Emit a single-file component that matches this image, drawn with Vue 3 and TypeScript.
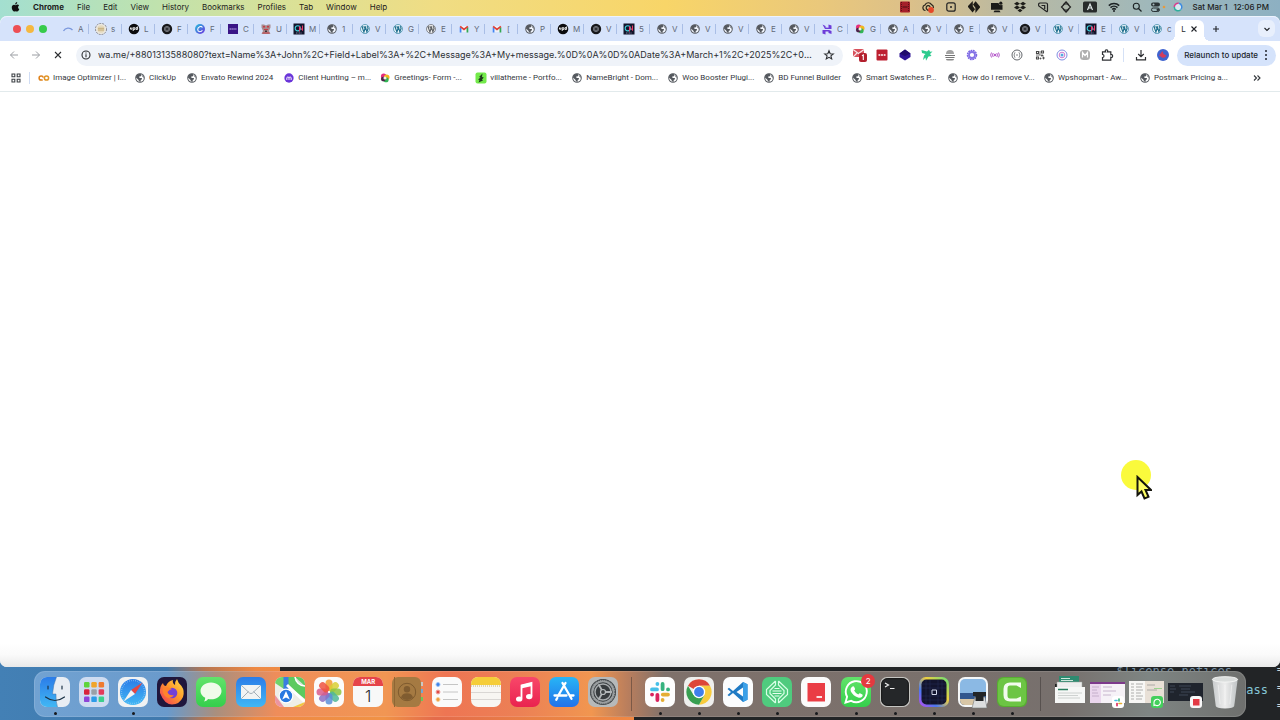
<script setup lang="ts">
interface Tab { icon: string; title: string }
interface Bookmark { icon: string; title: string; long?: boolean }
interface DockItem { icon: string; label: string; running?: boolean; badge?: string; date?: { month: string; day: string } }

const menus: string[] = ['File', 'Edit', 'View', 'History', 'Bookmarks', 'Profiles', 'Tab', 'Window', 'Help']

const statusIcons: string[] = ['st-film', 'st-cloud', 'st-square', 'st-bolt', 'st-display', 'st-dropbox', 'st-note', 'st-diamond', 'st-input', 'st-wifi', 'st-search', 'st-control', 'st-siri']

const tabs: Tab[] = [
  ['spinner', 'A'], ['ring', 's'], ['upd', 'L'], ['gpt', 'F'], ['canva', 'F'], ['violet', 'C'], ['bear', 'U'],
  ['neon', 'M'], ['globe', '1'], ['wp', 'V'], ['wp', 'G'], ['wpg', 'E'], ['gmail', 'Y'], ['gmail', '['],
  ['globe', 'P'], ['upd', 'M'], ['gpt', 'V'], ['neon', '5'], ['globe', 'V'], ['globe', 'V'], ['globe', 'V'],
  ['globe', 'E'], ['globe', 'V'], ['hletter', 'C'], ['flower', 'G'], ['globe', 'A'], ['globe', 'V'], ['globe', 'E'],
  ['globe', 'V'], ['gpt', 'V'], ['wp', 'V'], ['neon', 'E'], ['wp', 'V'], ['wp', 'c'],
].map(([icon, title]) => ({ icon, title }))

const url = 'wa.me/+8801313588080?text=Name%3A+John%2C+Field+Label%3A+%2C+Message%3A+My+message.%0D%0A%0D%0ADate%3A+March+1%2C+2025%2C+06%3A0…'

const extensions: string[] = ['x-mail', 'x-dots', 'x-cube', 'x-bird', 'x-stack', 'x-gear', 'x-signal', 'x-braces', 'x-qr', 'x-orbit', 'x-m', 'x-puzzle']

const bookmarks: Bookmark[] = [
  { icon: 'co', title: 'Image Optimizer | I...', long: true },
  { icon: 'globe', title: 'ClickUp' },
  { icon: 'globe', title: 'Envato Rewind 2024' },
  { icon: 'mcircle', title: 'Client Hunting – m...', long: true },
  { icon: 'flower', title: 'Greetings- Form -...', long: true },
  { icon: 'villa', title: 'villatheme - Portfo...', long: true },
  { icon: 'globe', title: 'NameBright - Dom...', long: true },
  { icon: 'globe', title: 'Woo Booster Plugi...', long: true },
  { icon: 'globe', title: 'BD Funnel Builder' },
  { icon: 'globe', title: 'Smart Swatches P...', long: true },
  { icon: 'globe', title: 'How do I remove V...', long: true },
  { icon: 'globe', title: 'Wpshopmart - Aw...', long: true },
  { icon: 'globe', title: 'Postmark Pricing a...', long: true },
]

const dockGroups: DockItem[][] = [
  [
    { icon: 'd-finder', label: 'Finder', running: true },
    { icon: 'd-launchpad', label: 'Launchpad' },
    { icon: 'd-safari', label: 'Safari', running: true },
    { icon: 'd-firefox', label: 'Firefox' },
    { icon: 'd-messages', label: 'Messages' },
    { icon: 'd-mail', label: 'Mail' },
    { icon: 'd-maps', label: 'Maps' },
    { icon: 'd-photos', label: 'Photos' },
    { icon: 'd-calendar', label: 'Calendar', date: { month: 'MAR', day: '1' } },
    { icon: 'd-contacts', label: 'Contacts' },
    { icon: 'd-reminders', label: 'Reminders' },
    { icon: 'd-notes', label: 'Notes' },
    { icon: 'd-music', label: 'Music' },
    { icon: 'd-appstore', label: 'App Store' },
    { icon: 'd-settings', label: 'System Settings' },
  ],
  [
    { icon: 'd-slack', label: 'Slack', running: true },
    { icon: 'd-chrome', label: 'Chrome', running: true },
    { icon: 'd-code', label: 'Code', running: true },
    { icon: 'd-local', label: 'Local', running: true },
    { icon: 'd-red', label: 'Notes board', running: true },
    { icon: 'd-whatsapp', label: 'WhatsApp', running: true, badge: '2' },
    { icon: 'd-terminal', label: 'Terminal', running: true },
    { icon: 'd-screen', label: 'Capture', running: true },
    { icon: 'd-preview', label: 'Preview', running: true },
    { icon: 'd-camtasia', label: 'Camtasia', running: true },
  ],
  [
    { icon: 'd-docs', label: 'Documents' },
    { icon: 'd-win1', label: 'Slack window' },
    { icon: 'd-win2', label: 'WhatsApp window' },
    { icon: 'd-win3', label: 'Editor window' },
    { icon: 'd-trash', label: 'Trash' },
  ],
]

const pads = ['#5fd43c', '#f0a52c', '#ef7a30', '#d8243c', '#9aa0a8', '#e33a5c', '#8e44d8', '#2d9be8', '#3ccf8c']
const petals = ['#f39a2e', '#d8cf35', '#8cc63f', '#4fb896', '#5a8fd8', '#8a6fc4', '#d85a8a', '#ee5340']
const rays = [0, 45, 90, 135, 180, 225, 270, 315]
</script>

<template>
  <svg class="defs" aria-hidden="true">
    <defs>
      <linearGradient id="g-blue" x2="0" y2="1"><stop offset="0" stop-color="#2b7ce8" /><stop offset="1" stop-color="#41b7f4" /></linearGradient>
      <linearGradient id="g-store" x2="0" y2="1"><stop offset="0" stop-color="#27b5f6" /><stop offset="1" stop-color="#2372ea" /></linearGradient>
      <linearGradient id="g-green" x2="0" y2="1"><stop offset="0" stop-color="#62e36a" /><stop offset="1" stop-color="#35cf4c" /></linearGradient>
      <linearGradient id="g-music" x2="0" y2="1"><stop offset="0" stop-color="#f8476a" /><stop offset="1" stop-color="#e9234f" /></linearGradient>
      <linearGradient id="g-fire" x1="1" y1="0" x2="0" y2="1"><stop offset="0" stop-color="#ffe04a" /><stop offset=".45" stop-color="#ff9a2c" /><stop offset="1" stop-color="#f0305c" /></linearGradient>
      <linearGradient id="g-rain2" x1="0" y1="1" x2="1" y2="0"><stop offset="0" stop-color="#c04af0" /><stop offset=".3" stop-color="#4a78f0" /><stop offset=".6" stop-color="#f0d040" /><stop offset="1" stop-color="#5fe07a" /></linearGradient>
      <linearGradient id="g-canva" x2="1" y2="1"><stop offset="0" stop-color="#22c1dc" /><stop offset="1" stop-color="#7030e0" /></linearGradient>
      <linearGradient id="g-bin"><stop offset="0" stop-color="#c9cccd" /><stop offset=".5" stop-color="#ededed" /><stop offset="1" stop-color="#bfc3c4" /></linearGradient>
      <clipPath id="c-tile"><rect width="30" height="30" rx="7" /></clipPath>
    </defs>

    <symbol id="apple" viewBox="0 0 14 16"><path d="M9.700 0c.1 1.100-.3 2-.9 2.700-.6.700-1.500 1.200-2.400 1.100C6.300 2.800 6.800 1.900 7.400 1.200 8 .500 8.900.100 9.700 0zM12.700 5.500c-1 .6-1.600 1.500-1.600 2.700 0 1.400.8 2.500 2 2.900-.5 1.700-1.900 4.100-3.400 4.100-.9 0-1.200-.6-2.300-.6s-1.500.6-2.300.6C3.200 15.200 1 11.700 1 8.700c0-2.900 1.800-4.400 3.600-4.400 1.100 0 2 .7 2.700.7.700 0 1.800-.8 3.100-.8.9 0 1.800.5 2.300 1.300z" fill="#111" /></symbol>

    <symbol id="st-film" viewBox="0 0 12 12"><rect x="1" y=".5" width="10" height="11" rx="1" fill="#a5202a" /><path d="M2.500 1v10M9.500 1v10" stroke="#5a1016" stroke-dasharray="1 1" /><path d="M3.500 6h5" stroke="#5a1016" stroke-width="1.200" /></symbol>
    <symbol id="st-cloud" viewBox="0 0 12 12"><path d="M3.500 9.500A2.800 2.800 0 0 1 3 4a3.600 3.600 0 0 1 6.500-.4A2.800 2.800 0 0 1 11.200 7M7 9.500A2.800 2.800 0 0 1 4.500 5.500a2 2 0 0 1 3.600.6" fill="none" stroke="#29251c" stroke-width="1.200" /><circle cx="9" cy="9" r="2.900" fill="#e5492a" /></symbol>
    <symbol id="st-square" viewBox="0 0 12 12"><rect x="1.800" y="1.800" width="8.400" height="8.400" rx="2" fill="none" stroke="#222" stroke-width="1.200" /><circle cx="6" cy="6" r="1" fill="#222" /></symbol>
    <symbol id="st-bolt" viewBox="0 0 12 12"><path d="M-.5 5.500 4.800 0v5.200L7 8.300 4.600 11.500zM7.400 12V6.800L5 3.500 7.600.300 12.500 6z" fill="#1d1b16" /></symbol>
    <symbol id="st-display" viewBox="0 0 12 12"><path d="M0 2h7.500q.5 2.200 2.500 2.200l1.500-.4v5H0zM3.500 9.500h5L9.500 11.300h-7z" fill="#1a1a18" /><circle cx="9.800" cy="2.200" r="1.600" fill="#1a1a18" /></symbol>
    <symbol id="st-dropbox" viewBox="0 0 12 12"><path d="M3 .8 6 2.700 3 4.600 0 2.700zM9 .8l3 1.900-3 1.900-3-1.900zM3 4.600l3 1.900-3 1.900-3-1.900zM9 4.600l3 1.900-3 1.900-3-1.900zM6 7.800l2.500 1.600L6 11.200 3.500 9.400z" fill="#1e1e1a" /></symbol>
    <symbol id="st-note" viewBox="0 0 12 12"><path d="M9.500 10.500 1.800 5Q1 2 3 2h6q1.500 0 1.500 1.500v6q0 1.500-1 1M4.500 4.500h3.200v3.500" fill="none" stroke="#222" stroke-width="1.200" /></symbol>
    <symbol id="st-diamond" viewBox="0 0 12 12"><path d="M4.500 3 1.500 6l3 3M7.500 3l3 3-3 3M6 .8 4 3h4zM6 11.200 4 9h4z" fill="none" stroke="#222" stroke-width="1.200" /></symbol>
    <symbol id="st-input" viewBox="0 0 14 12"><rect y=".5" width="14" height="11" rx="1.500" fill="#272b2b" /><path d="M4.500 9 7 3l2.500 6M5.500 7h3" fill="none" stroke="#dfe8e8" stroke-width="1.200" /></symbol>
    <symbol id="st-wifi" viewBox="0 0 12 12"><path d="M.800 4.600a7.400 7.400 0 0 1 10.400 0M2.500 6.600a5 5 0 0 1 7 0M4.200 8.500a2.600 2.600 0 0 1 3.600 0" fill="none" stroke="#1c2224" stroke-width="1.500" /><circle cx="6" cy="10" r="1" fill="#1c2224" /></symbol>
    <symbol id="st-search" viewBox="0 0 12 12"><circle cx="5.300" cy="5.300" r="3" fill="none" stroke="#1c2224" stroke-width="1.100" /><path d="m7.500 7.500 3 3" stroke="#1c2224" stroke-width="1.200" /></symbol>
    <symbol id="st-control" viewBox="0 0 16 12"><rect x="1" y="1.500" width="9" height="4" rx="2" fill="#2a3336" /><rect x="1.500" y="7" width="8" height="3.500" rx="1.700" fill="none" stroke="#2a3336" /><circle cx="3.500" cy="3.500" r="1" fill="#a9bcc0" /><circle cx="7.800" cy="8.800" r="1.300" fill="#2a3336" /><circle cx="14" cy="6" r="1.300" fill="#e79a3c" /></symbol>
    <symbol id="st-siri" viewBox="0 0 12 12"><circle cx="6" cy="6" r="4" fill="#d8e8ef" /><path d="M2.300 6a3.700 3.700 0 0 1 4.500-3.700" stroke="#d83c8c" stroke-width="1.500" fill="none" /><path d="M6.800 2.300a3.700 3.700 0 0 1 1.800 6.400" stroke="#3a8ae0" stroke-width="1.500" fill="none" /><path d="M8.600 8.700A3.700 3.700 0 0 1 2.300 6" stroke="#2fae9c" stroke-width="1.500" fill="none" /></symbol>

    <symbol id="globe" viewBox="-1 -1 14 14"><circle cx="6" cy="6" r="5" fill="#fff" fill-opacity=".7" stroke="#585c62" stroke-width="1.200" /><path d="M1 5.200C2 2.300 4 1 6.500 1.100L8 2.500 6.500 4.200H5L5.500 6H8L8.500 7.500 7 8 6.500 10.800C4.500 10.500 4.500 8 3.500 7.500zM9 2.500 11 5.500 9.500 5 8.500 3.700z" fill="#54585e" /></symbol>
    <symbol id="spinner" viewBox="0 0 12 12"><path d="M1.500 8A5.500 5.500 0 0 1 10.500 7" fill="none" stroke="#7b98dd" stroke-width="1.300" /></symbol>
    <symbol id="ring" viewBox="0 0 12 12"><circle cx="6" cy="6" r="5.600" fill="#ebe8e1" stroke="#74727a" stroke-width=".8" stroke-dasharray="2 1" /><circle cx="6" cy="6" r="3.700" fill="#e5d9bd" /><path d="M3 5.300h6M3 7h6" stroke="#b99f66" stroke-width=".8" /></symbol>
    <symbol id="upd" viewBox="0 0 12 12"><circle cx="6" cy="6" r="5.300" fill="#0b0b0d" /><path d="M2.500 4.500v1.700h1.400V4.500M5.200 8V4.700h1.600v1.800H5.400M8 6.400h1.600V3.500M8 6.400V4.700h1.400" stroke="#fff" stroke-width=".9" fill="none" /></symbol>
    <symbol id="gpt" viewBox="0 0 12 12"><circle cx="6" cy="6" r="5.200" fill="#17181b" /><circle cx="6" cy="6" r="2.600" fill="none" stroke="#85888e" stroke-width=".8" /><path d="M6 3.400 8.200 7.300H3.800zM6 8.600 3.800 4.700h4.400z" stroke="#75797f" stroke-width=".6" fill="none" /></symbol>
    <symbol id="canva" viewBox="0 0 12 12"><circle cx="6" cy="6" r="5" fill="url(#g-canva)" /><path d="M8.300 4.600C7.600 2.400 3.500 3.800 3.700 6.700 3.900 9.500 7.400 9 8.400 7.200" fill="none" stroke="#fff" stroke-width="1.100" /></symbol>
    <symbol id="violet" viewBox="0 0 12 12"><path d="M1 1h10v10H1z" fill="#3a1586" /><path d="M2.500 6h7" stroke="#c6b6ef" stroke-dasharray="1.500 .4" /></symbol>
    <symbol id="bear" viewBox="0 0 12 12"><path d="M1.500 1.500h2.500l2 1 2-1h2.500v3L9 8l1.500 3h-9L3 8 1.500 4.500z" fill="#a88b8e" /><path d="M3 3h2v1.500H3zM7 3h2v1.500H7zM4 6h4v1H4zM2.500 9.500h7v1h-7z" fill="#c63c45" /><path d="M5 7.500h2v1.500H5z" fill="#3c3136" /></symbol>
    <symbol id="neon" viewBox="0 0 12 12"><path d="M.500.500h11v11H.500z" fill="#13152b" /><circle cx="4.800" cy="5.300" r="2.600" stroke="#3fd0dd" stroke-width="1.100" fill="none" /><path d="M6.500 8.500V3.500L9.500 7.500V2.500" stroke="#e83a6a" fill="none" /><path d="M3 10h6" stroke="#a9b5d4" stroke-width=".7" stroke-dasharray="1 .5" /></symbol>
    <symbol id="wp" viewBox="-1 -1 14 14"><circle cx="6" cy="6" r="5.200" fill="#f0f7fb" stroke="#3b88a6" stroke-width=".9" /><path d="M2 3.600h2.400M2.700 3.800 4.700 9.500 6 5.600 5.300 3.700M5 3.600h2.400M6.500 3.800 8.200 9.300 9.600 5.200Q9.200 3.400 8.400 2.800" fill="none" stroke="#21708f" stroke-width="1.400" /></symbol>
    <symbol id="wpg" viewBox="-1 -1 14 14"><circle cx="6" cy="6" r="5.200" fill="#f4f4f4" stroke="#666a70" stroke-width=".9" /><path d="M2 3.600h2.400M2.700 3.800 4.700 9.500 6 5.600 5.300 3.700M5 3.600h2.400M6.500 3.800 8.200 9.300 9.600 5.200Q9.200 3.400 8.400 2.800" fill="none" stroke="#606469" stroke-width="1.400" /></symbol>
    <symbol id="gmail" viewBox="-1 -1 14 14"><path d="M1.500 2.500h9v7h-9z" fill="#eef1f8" /><path d="M2 10V4" stroke="#4285f4" stroke-width="2" /><path d="M10 10V4" stroke="#34a853" stroke-width="2" /><path d="M1.500 3 6 6.500 10.500 3" stroke="#df3f36" stroke-width="2" fill="none" /></symbol>
    <symbol id="hletter" viewBox="0 0 12 12"><path d="M1.500 1.500 4.500 3v1.500l3 .2V1.500l3 1v3.500H4zM1.500 10.500V7h6.500l2.500 1v3l-3-1V8.500h-3v3z" fill="#6c3bd8" /></symbol>
    <symbol id="flower" viewBox="-1 -1 14 14"><circle cx="4.500" cy="4" r="3.200" fill="#e72f7e" /><circle cx="8" cy="5" r="3.200" fill="#f2b51f" /><circle cx="7.200" cy="8" r="3" fill="#32b455" /><circle cx="4" cy="7.300" r="2.800" fill="#4a2448" /><circle cx="6" cy="6" r="1.800" fill="#f6f1e6" /></symbol>
    <symbol id="co" viewBox="0 0 12 12"><circle cx="3.200" cy="6" r="2.100" fill="none" stroke="#e0821a" stroke-width="1.500" stroke-dasharray="10 3.200" stroke-dashoffset="-1.600" /><circle cx="8.500" cy="6" r="2.100" fill="none" stroke="#e0962a" stroke-width="1.500" /></symbol>
    <symbol id="mcircle" viewBox="-1 -1 14 14"><circle cx="6" cy="6" r="5.400" fill="#6a35d9" /><path d="M3.500 8.300V5.500q1.200-1.500 2.500 0v2.800M6 5.500q1.300-1.500 2.500 0v2.800" stroke="#fff" stroke-width="1.100" fill="none" /></symbol>
    <symbol id="villa" viewBox="0 0 12 12"><rect x=".5" y=".5" width="11" height="11" rx="2" fill="#73ea4a" /><path d="M7.500 1.500 4 5l1.500.5L3 7.500 4.500 8 3.500 10.500 8 8.500 7 7.500 8.800 5.500 7 5z" fill="#1e3a1c" /></symbol>

    <symbol id="x-mail" viewBox="0 0 14 14"><path d="M0 1h11v8H0z" fill="#d8515c" /><path d="m0 1.500 5.500 4L11 1.500M0 9l4-4" stroke="#f6e8e9" stroke-width="1.200" fill="none" /><rect x="6" y="5" width="8" height="9" rx="2" fill="#b3202d" /><path d="m9 7.800 1.300-.8v5" stroke="#fff" stroke-width="1.100" fill="none" /></symbol>
    <symbol id="x-dots" viewBox="0 0 14 14"><rect x="1.500" y="1.500" width="11" height="11" rx="1" fill="#bd1f30" /><path d="M3.500 7h7" stroke="#fff" stroke-width="1.500" stroke-dasharray="1.800 .8" /></symbol>
    <symbol id="x-cube" viewBox="0 0 14 14"><path d="M7 1.500 12.500 5.500V9L7 12.500 1.500 9V5.500z" fill="#2f1596" /><path d="M7 1.500 12.500 5.500 7 8 1.500 5.500z" fill="#210c6c" /></symbol>
    <symbol id="x-bird" viewBox="0 0 14 14"><path d="m1.500 2 5.500 1.500L9 1.800l1 2 2.500-.3L10 6l1.500 2-3 .5L6 12.800 5.500 9.500 3 12l1-4.500L5.500 6 2 5z" fill="#2ccb8d" /></symbol>
    <symbol id="x-stack" viewBox="0 0 14 14"><path d="M3 6a4 4 0 0 1 8 0z" fill="#a3a3a3" /><path d="M2 7.500h10M2.500 9.500h9" stroke="#757575" stroke-width="1.100" /><path d="M3 11h8q0 1.500-2 1.500H5Q3 12.500 3 11" fill="#8a8a8a" /></symbol>
    <symbol id="x-gear" viewBox="0 0 14 14"><circle cx="7" cy="7" r="4.500" fill="none" stroke="#7c66e4" stroke-width="1.500" stroke-dasharray="1.800 .6" /><circle cx="7" cy="7" r="3" fill="none" stroke="#8573e6" stroke-width="1.800" /></symbol>
    <symbol id="x-signal" viewBox="0 0 14 14"><circle cx="7" cy="7" r="1.200" fill="#b65acb" /><path d="M5.200 5q-1.300 2 0 4M8.800 5q1.300 2 0 4M3.500 4.500q-1.700 2.500 0 5M10.500 4.500q1.700 2.500 0 5" stroke="#b65acb" fill="none" /></symbol>
    <symbol id="x-braces" viewBox="0 0 14 14"><circle cx="7" cy="7" r="5" fill="none" stroke="#62666b" /><path d="M5.300 4.500q-1 0-.8 1.200.1 1-.7 1.300.8.300.7 1.300-.2 1.200.8 1.200M8.700 4.500q1 0 .8 1.200-.1 1 .7 1.300-.8.300-.7 1.300.2 1.200-.8 1.200M6 7h2" fill="none" stroke="#62666b" stroke-width=".8" /></symbol>
    <symbol id="x-qr" viewBox="0 0 14 14"><path d="M3.500 3.500h2v2h-2zM8.500 3h2v2h-2zM3.500 9h2v2h-2z" fill="none" stroke="#4a4a4a" stroke-width="1.100" /><path d="M7 3v4M3 7h4M8 7h2v1H8zM10 9h1v2h-1zM7 10h1v1H7z" stroke="#555" stroke-width=".8" fill="#444" /></symbol>
    <symbol id="x-orbit" viewBox="0 0 14 14"><circle cx="7" cy="7" r="5" fill="none" stroke="#7f8ee4" /><circle cx="7" cy="7" r="2.800" fill="none" stroke="#d07ad0" /><circle cx="7" cy="7" r="1.500" fill="#53a8df" /></symbol>
    <symbol id="x-m" viewBox="0 0 14 14"><rect x="2" y="2" width="10" height="10" rx="3.500" fill="#b0b0b0" /><path d="M4.500 9.500v-5L7 7.500l2.500-3v5" fill="none" stroke="#fff" stroke-width="1.200" /></symbol>
    <symbol id="x-puzzle" viewBox="0 0 14 14"><path d="M2.500 3.800h3Q4.800 1.800 6.500 1.800T7.500 3.800h3.300v3q1.800-.6 1.800 1.200t-1.800 1.200v2.900H2.500V9.500q1.500 0 1.500-1.500T2.500 6.500z" fill="none" stroke="#2f3134" stroke-width="1.200" /></symbol>

    <symbol id="d-finder" viewBox="0 0 30 30"><g clip-path="url(#c-tile)"><path d="M0 0h30v30H0z" fill="#e8edf3" /><path d="M0 0h16.500Q13 8 12.500 17H16Q15.800 25 17.500 30H0z" fill="url(#g-blue)" /><path d="M16.500 0Q13 8 12.500 17H16Q15.800 25 17.500 30" fill="none" stroke="#4474a8" stroke-width=".5" /><path d="M8 9v3M22 9v3M5.500 20q9.500 7 19 0" fill="none" stroke="#1b3245" stroke-width="1.200" stroke-linecap="round" /></g></symbol>
    <symbol id="d-launchpad" viewBox="0 0 30 30"><rect width="30" height="30" rx="7" fill="#cedcf1" /><rect v-for="(c, i) in pads" :key="i" :x="5 + (i % 3) * 7.3" :y="5 + Math.floor(i / 3) * 7.3" width="5.500" height="5.500" rx="1.200" :fill="c" /></symbol>
    <symbol id="d-safari" viewBox="0 0 30 30"><rect width="30" height="30" rx="7" fill="#f0f2f3" /><circle cx="15" cy="15" r="13" fill="url(#g-blue)" /><circle cx="15" cy="15" r="11.500" fill="none" stroke="#a7d3f4" stroke-width="1.300" stroke-dasharray=".5 1.500" /><path d="M24.500 5.500 17 17l-4-4z" fill="#e44743" /><path d="M5.500 24.500 13 13l4 4z" fill="#f3f3f3" /></symbol>
    <symbol id="d-firefox" viewBox="0 0 30 30"><rect width="30" height="30" rx="7" fill="#20163c" /><path d="M3 16Q2.500 9 6 6q.5 3 3 3Q11 4 16 3q-1 3 2 5 0-4 2-6 1 4 4.500 7Q28 14 26 20 22.500 27.500 15 27.500T3 16z" fill="url(#g-fire)" /><circle cx="15" cy="16" r="5.300" fill="#7440d8" /><path d="M6 11q5-2 9 1-3 .5-4.500 3Q12 19 17 18q-3 4.500-8 2-4-3-3-9z" fill="#ff842c" /></symbol>
    <symbol id="d-messages" viewBox="0 0 30 30"><rect width="30" height="30" rx="7" fill="url(#g-green)" /><path d="M15 5.500c6 0 10.500 3.700 10.500 8.500S21 22.300 15 22.300q-1.500 0-2.800-.3-1.500 2-4.200 2.500 1.300-1.600 1.200-3.700Q4.500 18.200 4.500 14C4.500 9.200 9 5.500 15 5.500z" fill="#effbea" /></symbol>
    <symbol id="d-mail" viewBox="0 0 30 30"><rect width="30" height="30" rx="7" fill="url(#g-blue)" /><rect x="5" y="8" width="20" height="14" rx="1.500" fill="#f2f3f3" /><path d="m5.500 8.500 8 7.500q1.500 1.200 3 0l8-7.500M5.500 21.500l7-7M24.500 21.500l-7-7" stroke="#9aa6b0" fill="none" stroke-width=".9" /></symbol>
    <symbol id="d-maps" viewBox="0 0 30 30"><g clip-path="url(#c-tile)"><path d="M0 0h30v30H0z" fill="#eeeee8" /><path d="M0 0h9v12L0 6z" fill="#6fd36a" /><path d="M12 0h18v22L12 8z" fill="#5cca5f" /><path d="M20 0a10 10 0 0 0 10 9" fill="#d7e2d6" stroke="#fff" stroke-width="1.500" /><path d="M11 0v18" stroke="#3a7de0" stroke-width="5" /><path d="M0 18 9 30H0z" fill="#ec94a0" /><path d="m12 8 18 17" stroke="#fff" stroke-width="3" /><path d="M18 30 30 25v5z" fill="#f2c83f" /><circle cx="11" cy="19" r="6.800" fill="#2878e0" stroke="#fff" stroke-width="1.200" /><path d="m11 14 3.800 8.500L11 20.500 7.200 22.500z" fill="#fff" /></g></symbol>
    <symbol id="d-photos" viewBox="0 0 30 30"><rect width="30" height="30" rx="7" fill="#fbfbfb" /><rect v-for="(c, i) in petals" :key="i" x="11.500" y="2.500" width="7" height="11.500" rx="3.500" :fill="c" fill-opacity=".85" :transform="`rotate(${rays[i]} 15 15)`" /></symbol>
    <symbol id="d-calendar" viewBox="0 0 30 30"><g clip-path="url(#c-tile)"><path d="M0 0h30v30H0z" fill="#f8f8f8" /><path d="M0 0h30v9H0z" fill="#e5444a" /></g></symbol>
    <symbol id="d-contacts" viewBox="0 0 30 30"><path d="M27 5h4v4h-4z" fill="#c9c9c6" /><path d="M27 12h4v4h-4z" fill="#74a6d6" /><path d="M27 20h4v4h-4z" fill="#6cc65c" /><rect width="29" height="30" rx="6" fill="#a57a42" /><path d="M2.500 0v30" stroke="#8f6634" /><circle cx="15" cy="15" r="8.700" fill="none" stroke="#7e5a2e" /><circle cx="15" cy="12.300" r="3.200" fill="#805c30" /><path d="M9 20.500q1-4.300 6-4.300t6 4.300q-6 5-12 0z" fill="#805c30" /></symbol>
    <symbol id="d-reminders" viewBox="0 0 30 30"><rect width="30" height="30" rx="7" fill="#fafafa" /><path d="M11 7.500h15M11 15h15M11 22.500h15" stroke="#b8b8b8" stroke-width=".8" /><g stroke-width="1"><circle cx="6" cy="7.500" r="2" fill="#3d83e8" stroke="#9fc2f4" /><circle cx="6" cy="15" r="2" fill="#df4a45" stroke="#f0aaa6" /><circle cx="6" cy="22.500" r="2" fill="#ef9c3a" stroke="#f7cf9a" /></g></symbol>
    <symbol id="d-notes" viewBox="0 0 30 30"><g clip-path="url(#c-tile)"><path d="M0 0h30v30H0z" fill="#f7f6f2" /><path d="M0 0h30v8H0z" fill="#f5cd38" /><path d="M0 9h30" stroke="#c6b675" stroke-dasharray="1 1" /><path d="M0 15.500h30M0 22.500h30" stroke="#d0cfcb" stroke-width=".8" /></g></symbol>
    <symbol id="d-music" viewBox="0 0 30 30"><rect width="30" height="30" rx="7" fill="url(#g-music)" /><path d="M11.500 21.500V8.500L21.500 6v13" fill="none" stroke="#fff" stroke-width="1.800" /><path d="M11 8 22 5.500V9L11 11.500z" fill="#fff" /><ellipse cx="9.200" cy="22" rx="3.200" ry="2.600" fill="#fff" /><ellipse cx="19.200" cy="19.600" rx="3.200" ry="2.600" fill="#fff" /></symbol>
    <symbol id="d-appstore" viewBox="0 0 30 30"><rect width="30" height="30" rx="7" fill="url(#g-store)" /><path d="M16.500 6 9 19M13.500 6 22.500 21.800M5.500 18.500h12M21 18.500h3.500M8.300 21 7.300 22.700" stroke="#fff" stroke-width="2.300" stroke-linecap="round" fill="none" /></symbol>
    <symbol id="d-settings" viewBox="0 0 30 30"><rect width="30" height="30" rx="7" fill="#b6b9ba" /><circle cx="15" cy="15" r="13" fill="#383c3f" /><circle cx="15" cy="15" r="11" fill="none" stroke="#9a9ea0" stroke-width="2.600" /><circle cx="15" cy="15" r="12" fill="none" stroke="#3c4043" stroke-width="1" stroke-dasharray="1 1" /><circle cx="15" cy="15" r="8" fill="none" stroke="#a9adaf" stroke-width="1.400" /><path d="M15 15H24M15 15 10.500 7.200M15 15 10.500 22.800" stroke="#b0b4b6" stroke-width="1.800" /><circle cx="15" cy="15" r="2.500" fill="#3c4042" stroke="#b9bdbf" stroke-width="1.200" /></symbol>
    <symbol id="d-slack" viewBox="0 0 30 30"><rect width="30" height="30" rx="7" fill="#fdfdfd" /><g fill="none" stroke-width="3.800" stroke-linecap="round"><path d="M7 12.400h5M12.400 6.900v.1" stroke="#45bfe8" /><path d="M17.600 7v5.200M23 12.400h.1" stroke="#36b27e" /><path d="M17.800 17.600H23M17.600 23v.1" stroke="#e5ae33" /><path d="M12.400 17.800V23M7 17.600h.1" stroke="#d9245d" /></g></symbol>
    <symbol id="d-chrome" viewBox="0 0 30 30"><rect width="30" height="30" rx="7" fill="#eeefed" /><path d="M15 15 4 8.700A12.700 12.700 0 0 1 26 8.700H15z" fill="#dd4538" /><path d="M26 8.700A12.700 12.700 0 0 1 15 27.700L20.500 18 15 8.700z" fill="#f7cb3c" /><path d="M4 8.700A12.700 12.700 0 0 0 15 27.700L20.500 18 15 20.500 9.500 18z" fill="#379f50" /><circle cx="15" cy="15" r="6.200" fill="#fff" /><circle cx="15" cy="15" r="4.900" fill="#3f7fec" /></symbol>
    <symbol id="d-code" viewBox="0 0 30 30"><rect width="30" height="30" rx="7" fill="#fbfcfd" /><path d="m20 5 4.500 2.200v15.600L20 25 10 16l-4 3.200L4.500 18 8 15 4.500 12 6 10.800 10 14zM20 10.500 13.500 15l6.500 4.500z" fill="#1f7ac4" fill-rule="evenodd" /><path d="m20 5 4.500 2.200v15.600L20 25z" fill="#3ba0e8" /></symbol>
    <symbol id="d-local" viewBox="0 0 30 30"><rect width="30" height="30" rx="7" fill="#4fcb7e" /><path d="M13.500 4 4.500 12.500v5l9 8.500M16.500 4l9 8.500v5l-9 8.500M13.500 4v4L8 13.500v3l5.500 5.500v4M16.500 4v4l5.500 5.500v3L16.500 22v4" fill="none" stroke="#d8ffe6" stroke-width="1.200" /><path d="M12.500 11.500h5M10.500 14h9M10.500 16.500h9M12.500 19h5" stroke="#e8fff0" stroke-width="1.100" /></symbol>
    <symbol id="d-red" viewBox="0 0 30 30"><rect width="30" height="30" rx="7" fill="#fbfbfb" /><path d="M6.500 6h17.500v18.500H6.500z" fill="#ea3d45" /><path d="M15.500 20h5.500" stroke="#fff" stroke-width="1.700" /></symbol>
    <symbol id="d-whatsapp" viewBox="0 0 30 30"><rect width="30" height="30" rx="7" fill="url(#g-green)" /><path d="m4.500 25.500 1.600-5.800A10.500 10.500 0 1 1 10.200 23.800z" fill="none" stroke="#fff" stroke-width="1.900" /><path d="M11.500 9.500q1-.8 1.600.3l1 2.200q0 .8-1 1.600 1.500 2.800 4.200 4 1-1.400 1.700-1.300l2.400 1.200q.7.500-.1 1.900-1.500 2-4.200 1.200-5-1.500-7.300-6.300-1-3 1.700-4.800z" fill="#fff" /></symbol>
    <symbol id="d-terminal" viewBox="0 0 30 30"><rect width="30" height="30" rx="7" fill="#c5c5c2" /><rect x="1.600" y="1.600" width="26.800" height="26.800" rx="5.500" fill="#252729" stroke="#111" /><path d="m5 6 3.500 2L5 10M10 11.500h4.500" stroke="#eee" stroke-width="1.200" fill="none" /></symbol>
    <symbol id="d-screen" viewBox="0 0 30 30"><rect width="30" height="30" rx="7" fill="url(#g-rain2)" /><rect x="2.500" y="2.500" width="25" height="25" rx="5" fill="#13142e" /><path d="M7 3v24M11 3v24M19 3v24M23 3v24M3 7h24M3 11h24M3 19h24M3 23h24" stroke="#242850" stroke-width=".6" /><path d="M13 13h4.500v4.500H13z" stroke="#d4d8ec" fill="none" /></symbol>
    <symbol id="d-preview" viewBox="0 0 30 30"><rect width="30" height="30" rx="7" fill="#f5f7f8" /><rect x="2" y="2" width="26" height="26" rx="5" fill="#8bb9e4" /><path d="M2 16h26v7q0 5-5 5H7q-5 0-5-5z" fill="#32578e" /><path d="M2 22h15v6H7q-5 0-5-5z" fill="#d8c6a6" /><path d="M17 20h10l2 11H14z" fill="#dcdedf" stroke="#74787b" stroke-width=".6" /><path d="M15 15h13v4H15zM17.500 19h8v5h-8z" fill="#222527" /></symbol>
    <symbol id="d-camtasia" viewBox="0 0 30 30"><rect width="30" height="30" rx="6" fill="#58ae32" /><rect x="1" y="1" width="28" height="28" rx="6" fill="#6cc544" /><path d="M24 8V5.500H13Q6.500 5.500 6.500 12v6q0 6.500 6.500 6.500h11v-5L19.500 21.500H13q-2.500 0-2.500-3v-7q0-3 2.500-3h6.500L24 11z" fill="#f2fbee" /></symbol>
    <symbol id="d-docs" viewBox="0 0 34 30"><path d="M7-1h20v12H7z" fill="#e9f0eb" /><path d="M7-1h20v6H7z" fill="#2e8b70" /><path d="M9 1.500h9M9 3.500h12" stroke="#cfe6dc" /><path d="M3 7h26v17H3z" fill="#222" /><path d="M5 5h25v12H5z" fill="#eee" stroke="#98a49e" stroke-width=".5" /><path d="M3 10h30v16H3z" fill="#f6f7f6" /><path d="M6 12.500h10" stroke="#297d5e" stroke-width="1.500" /><path d="M6 16h24M6 18.500h20M6 21h22" stroke="#c4c8c6" stroke-width=".8" /></symbol>
    <symbol id="d-win1" viewBox="0 0 38 30"><path d="M1 5h35v21H1z" fill="#f6f2f7" /><path d="M1 5h35v2H1z" fill="#7d3a8c" /><path d="M1 7h11v19H1z" fill="#ead6ed" /><path d="M3 10h7M3 13h5M3 16h6M3 19h7M14 10h9M14 14h13M14 18h8" stroke="#bda6c3" stroke-width=".8" /><rect x="23" y="19" width="12" height="12" rx="3" fill="#fff" /><g fill="none" stroke-width="1.600" stroke-linecap="round"><path d="M26 23.500h2" stroke="#45bfe8" /><path d="M30 22v2" stroke="#36b27e" /><path d="M30 26.500h2.500" stroke="#e5ae33" /><path d="M28 26.500v2.200" stroke="#d9245d" /></g></symbol>
    <symbol id="d-win2" viewBox="0 0 38 30"><path d="M1 4h35v22H1z" fill="#f7f7f5" /><path d="M17 4h19v22H17z" fill="#e8e0d6" /><path d="M3 7h3M3 10h3M3 13h3M3 16h3M3 19h3M3 22h3M8 7h7M8 10h6M8 13h7M8 16h5M8 19h7M8 22h6M19 8h8M19 13h10" stroke="#9c9d9b" stroke-width=".8" /><path d="M26 11h8v1h-8z" fill="#9bd48e" /><rect x="23" y="19" width="12" height="12" rx="3" fill="#44cf5c" /><path d="M26 28.500v-3a3.200 3.200 0 1 1 1.300 2.500z" fill="none" stroke="#fff" stroke-width="1.100" /></symbol>
    <symbol id="d-win3" viewBox="0 0 38 30"><path d="M1 6h35v18H1z" fill="#1f242d" /><path d="M3 9h5M3 12h6M3 15h4M12 9h12M14 12h9M14 15h14M12 18h9" stroke="#485261" stroke-width=".8" /><rect x="23" y="19" width="12" height="12" rx="3" fill="#f8f8f8" /><path d="M26 22h6.500v6.500H26z" fill="#e23a44" /></symbol>
    <symbol id="d-trash" viewBox="0 0 30 34"><path d="M2 3.500 5.500 31q.5 2.500 9.500 2.500t9.500-2.500L28 3.500z" fill="url(#g-bin)" /><ellipse cx="15" cy="3.500" rx="13" ry="2.800" fill="#dadddc" stroke="#f4f5f4" /><path d="m8 9 2 20M15 9v21M22 9l-2 20" stroke="#fff" stroke-opacity=".45" /></symbol>
  </svg>

  <div class="desktop">
    <div class="editor-edge" aria-hidden="true" />
    <div class="editor" aria-hidden="true">
      <span class="code">$license_notices</span>
      <span class="code keyword">ass</span>
      <span class="equals"><i>=</i><i>=</i><i>=</i></span>
    </div>

    <header class="menubar">
      <nav class="menus">
        <svg class="apple"><use href="#apple" /></svg>
        <button class="app-name" type="button">Chrome</button>
        <button v-for="m in menus" :key="m" type="button">{{ m }}</button>
      </nav>
      <div class="status">
        <svg v-for="s in statusIcons" :key="s" :class="s"><use :href="'#' + s" /></svg>
        <time><span>Sat Mar 1</span><span>12:06 PM</span></time>
      </div>
    </header>

    <section class="window">
      <div class="tabstrip">
        <div class="lights">
          <button type="button" class="close" aria-label="Close" />
          <button type="button" class="minimize" aria-label="Minimize" />
          <button type="button" class="zoom" aria-label="Zoom" />
        </div>
        <div class="tabs">
          <button v-for="(t, i) in tabs" :key="i" class="tab" type="button">
            <svg><use :href="'#' + t.icon" /></svg><span>{{ t.title }}</span>
          </button>
        </div>
        <div class="tab-active">
          <span>L</span>
          <button type="button" aria-label="Close tab"><svg viewBox="0 0 8 8"><path d="m1.500 1.500 5 5m0-5-5 5" /></svg></button>
        </div>
        <button class="new-tab" type="button" aria-label="New tab"><svg viewBox="0 0 8 8"><path d="M4 1v6M1 4h6" /></svg></button>
        <button class="tab-search" type="button" aria-label="Search tabs"><svg viewBox="0 0 8 8"><path d="m1.500 3 2.500 2.500L6.500 3" /></svg></button>
      </div>

      <div class="toolbar">
        <div class="nav">
          <button type="button" aria-label="Back"><svg viewBox="0 0 10 10"><path d="M9 5H1.500M5 1.500 1.500 5 5 8.500" /></svg></button>
          <button type="button" aria-label="Forward"><svg viewBox="0 0 10 10"><path d="M1 5h7.500M5 1.500 8.500 5 5 8.500" /></svg></button>
          <button type="button" class="stop" aria-label="Stop"><svg viewBox="0 0 10 10"><path d="m2 2 6 6m0-6L2 8" /></svg></button>
        </div>
        <div class="omnibox">
          <svg viewBox="0 0 12 12"><circle cx="6" cy="6" r="4" /><path d="M6 5.300v3M6 3.500v1" /></svg>
          <input type="text" :value="url" aria-label="Address" spellcheck="false" />
          <button type="button" aria-label="Bookmark this page"><svg viewBox="0 0 12 12"><path d="m6 1.800 1.200 2.900 3.100.2-2.400 2 .8 3L6 8.300 3.300 9.900l.8-3-2.400-2 3.100-.2z" /></svg></button>
        </div>
        <div class="extensions">
          <button v-for="e in extensions" :key="e" type="button" :aria-label="e"><svg><use :href="'#' + e" /></svg></button>
        </div>
        <div class="profile">
          <button type="button" aria-label="Downloads"><svg viewBox="0 0 12 12"><path d="M6 1v6.500M3.200 5 6 7.700 8.800 5M1.500 8v2.800h9V8" fill="none" stroke="#2c2e31" stroke-width="1.200" /></svg></button>
          <button type="button" aria-label="Profile"><svg viewBox="0 0 12 12"><circle cx="6" cy="6" r="6" fill="#3f63cf" /><path d="M2 6.500 5.500 2l1 3 3 1.500Q8 9.500 5 8.500z" fill="#d33c5c" /></svg></button>
        </div>
        <button class="relaunch" type="button">Relaunch to update<svg viewBox="0 0 4 12"><circle cx="2" cy="2" r="1" /><circle cx="2" cy="6" r="1" /><circle cx="2" cy="10" r="1" /></svg></button>
      </div>

      <nav class="bookmarks">
        <button class="apps" type="button" aria-label="Apps"><svg viewBox="0 0 12 12"><path d="M2 2h2.800v2.800H2zM7.200 2H10v2.800H7.200zM2 7.200h2.800V10H2zM7.200 7.200H10V10H7.200z" /></svg></button>
        <a v-for="b in bookmarks" :key="b.title" href="#" :class="{ long: b.long }"><svg><use :href="'#' + b.icon" /></svg><span>{{ b.title }}</span></a>
        <button class="more" type="button" aria-label="More bookmarks"><svg viewBox="0 0 8 8"><path d="m1 1.500 2.500 2.500L1 6.500M4.500 1.500 7 4 4.500 6.500" /></svg></button>
      </nav>
      <main class="page" />
    </section>

    <footer class="dock">
      <template v-for="(g, gi) in dockGroups" :key="gi">
        <span v-if="gi > 0" class="divider" />
        <button v-for="d in g" :key="d.icon" class="app" :class="[d.icon, { running: d.running }]" type="button" :aria-label="d.label">
          <svg><use :href="'#' + d.icon" /></svg>
          <span v-if="d.date" class="date"><b>{{ d.date.month }}</b><span>{{ d.date.day }}</span></span>
          <span v-if="d.badge" class="badge">{{ d.badge }}</span>
        </button>
      </template>
    </footer>

    <div class="pointer" aria-hidden="true">
      <svg viewBox="0 0 16 26"><path d="M1.500 2v18l4-3.500 3 7 4-1.700-3-6.800H15z" fill="#ffff63" stroke="#15150c" stroke-width="2" /></svg>
    </div>
  </div>
</template>

<style>
body { margin: 0; }
</style>

<style scoped>
.defs { position: absolute; width: 0; height: 0; }
.desktop {
  position: relative;
  display: flex;
  flex-direction: column;
  height: 100vh;
  overflow: hidden;
  color: #25282c;
  font: 8px/12px Inter, "Liberation Sans", sans-serif;
  background:
    linear-gradient(90deg, #a3dfd0 0, #bfe2ae 12%, #d9e198 22%, #f0dd84 34%, #f8d568 52%, #eac87b 64%, #dcc089 71%, #b9b9a2 79%, #9fb8bb 90%, #8db0c2 100%) top / 100% 60px no-repeat,
    linear-gradient(90deg, #4380b5 0, #4079ad 13%, #b87650 16%, #ee8944 20%, #f09245 30%, #e46b4b 34%, #e98145 42%, #f08843 50%);
}
button { display: flex; align-items: center; justify-content: center; padding: 0; border: 0; background: none; color: inherit; font: inherit; }
svg { display: block; flex: none; }
symbol { overflow: visible; }

.editor, .editor-edge { position: absolute; right: 0; background: #222426; }
.editor { top: 600px; bottom: 0; left: 634px; font: 12px/14px "DejaVu Sans Mono", monospace; }
.editor-edge { bottom: 48px; left: 280px; height: 12px; }
.code { position: absolute; right: 48px; bottom: 42px; color: #7892a5; }
.keyword { right: 12px; bottom: 23px; color: #85c6d6; }
.equals { position: absolute; right: -4px; bottom: 4px; color: #ccd4d6; }
.equals i { display: block; height: 18px; font-style: normal; }

.menubar { display: flex; align-items: center; justify-content: space-between; height: 14px; padding: 0 11px; color: #1d211c; }
.menus { display: flex; align-items: center; gap: 13px; }
.apple { width: 9px; height: 10px; }
.app-name { font-weight: 700; }
.status { display: flex; align-items: center; gap: 11px; }
.status svg { width: 12px; height: 12px; }
.status .st-input { width: 14px; }
.status .st-control { width: 16px; margin-right: -5px; margin-left: -4px; }
.status time { display: flex; gap: 6px; margin-left: -2px; font-weight: 500; }

.window { position: relative; display: flex; flex: 1; flex-direction: column; margin: 2px 0 53px; overflow: hidden; border-radius: 7px; background: #fff; }
.window::after { content: ""; position: absolute; inset: 0; border-radius: 7px; box-shadow: inset 0 1px #edf3fd; pointer-events: none; }
.tabstrip { display: flex; align-items: stretch; height: 25px; background: #d6e3fb; }
.lights { display: flex; align-items: center; gap: 5px; width: 42px; padding-left: 13px; }
.lights button { width: 8px; height: 8px; border-radius: 4px; }
.close { background: #ed4f55; }
.minimize { background: #f5b840; }
.zoom { background: #36cb4b; }
.tabs { display: flex; flex: 1; min-width: 0; margin-right: -3px; margin-left: 1px; }
.tab { position: relative; flex: 1; justify-content: flex-start; gap: 4px; min-width: 0; padding-left: 6px; overflow: hidden; }
.tab::after { content: ""; position: absolute; right: 0; width: 1px; height: 10px; background: #a9bee6; }
.tab:last-child::after { display: none; }
.tab svg { width: 12px; height: 12px; }
.tab span { color: #626978; }
.tab-active { position: relative; display: flex; align-items: center; justify-content: center; gap: 4px; width: 29px; margin-top: 4px; padding-bottom: 4px; border-radius: 6px 6px 0 0; background: #fff; }
.tab-active::before, .tab-active::after { content: ""; position: absolute; bottom: 0; width: 6px; height: 6px; }
.tab-active::before { right: 100%; background: radial-gradient(circle at 0 0, transparent 6px, #fff 6px); }
.tab-active::after { left: 100%; background: radial-gradient(circle at 100% 0, transparent 6px, #fff 6px); }
.tab-active svg, .new-tab svg, .tab-search svg { width: 8px; height: 8px; fill: none; stroke: #202328; stroke-width: 1.1; }
.new-tab { width: 24px; }
.tab-search { align-self: center; width: 17px; height: 17px; margin: 0 5px 0 30px; border-radius: 6px; background: #e8effc; }

.toolbar { display: flex; align-items: center; height: 28px; background: #fff; }
.nav { display: flex; width: 76px; padding-left: 3px; box-sizing: border-box; }
.nav button { width: 22px; }
.nav svg { width: 10px; height: 10px; fill: none; stroke: #9a9da2; stroke-width: 1; }
.nav .stop svg { stroke: #2c2e31; stroke-width: 1.1; }
.omnibox { display: flex; flex: 1; align-items: center; gap: 6px; height: 21px; min-width: 0; padding: 0 8px 0 4px; border-radius: 11px; background: #eff3f9; }
.omnibox svg { width: 12px; height: 12px; fill: none; stroke: #2c2e31; stroke-width: 1.1; }
.omnibox input { flex: 1; min-width: 0; height: 16px; padding: 0; border: 0; outline: 0; background: none; color: #2b2f34; font: 9px/16px Inter, "Liberation Sans", sans-serif; text-overflow: ellipsis; }
.extensions { display: grid; grid-template-columns: repeat(12, 1fr); width: 270px; margin-left: 5px; padding-right: 5px; border-right: 1px solid #d5e1f6; }
.extensions svg { width: 14px; height: 14px; }
.profile { display: flex; gap: 10px; padding: 0 8px 0 11px; }
.profile svg { width: 12px; height: 12px; }
.relaunch { justify-content: space-between; gap: 6px; height: 21px; margin-right: 4px; padding: 0 8px 0 7px; border-radius: 11px; background: #d5e3fb; color: #20252c; font-weight: 500; white-space: nowrap; }
.relaunch svg { width: 4px; height: 12px; fill: #20252c; }

.bookmarks { display: flex; align-items: center; gap: 10px; height: 17px; padding: 0 19px 5px 10px; border-bottom: 1px solid #e2eaec; font-family: Roboto, "Liberation Sans", sans-serif; }
.bookmarks a { display: flex; align-items: center; gap: 3px; color: #34383d; text-decoration: none; white-space: nowrap; }
.bookmarks a.long { width: 86px; }
.bookmarks a svg { width: 12px; height: 12px; }
.apps { padding-right: 7px; border-right: 1px solid #cfdcf4; margin-right: -2px; }
.apps svg { width: 12px; height: 12px; fill: none; stroke: #3c4045; stroke-width: 1.1; }
.more { margin-left: auto; }
.more svg { width: 8px; height: 8px; fill: none; stroke: #34383d; stroke-width: 1.1; }
.page { flex: 1; background: linear-gradient(0deg, #e9e9e9 0, #fafafa 12px, #fff 24px); }

.dock { position: absolute; right: 34px; bottom: 3px; left: 34px; display: flex; height: 46px; padding: 0 1px; border-radius: 11px; background: linear-gradient(90deg, #71a2d2 0, #6a9acb 11%, #a98f7e 15%, #ef8d5a 20%, #f19653 29%, #ee7553 34%, #ec8055 40%, #f19650 46%, #b97e5d 49%, #7f716b 52%, #77706d 85%, #7e8583 92%, #6f706e 100%); box-shadow: inset 0 0 0 1px rgba(255, 255, 255, .12); }
.app { position: relative; flex: 1; min-width: 0; padding-bottom: 4px; }
.app svg { width: 30px; height: 30px; overflow: visible; }
.app.running::after { content: ""; position: absolute; bottom: 2px; left: 50%; width: 3px; height: 3px; margin-left: -1px; border-radius: 2px; background: #16181b; }
.app.d-docs svg { width: 34px; }
.app.d-win1 svg, .app.d-win2 svg, .app.d-win3 svg { width: 38px; }
.app.d-trash svg { height: 33px; }
.divider { align-self: center; width: 1px; height: 34px; margin: 0 8px; background: rgba(40, 35, 35, .4); }
.badge { position: absolute; top: 3px; right: 0; width: 14px; height: 14px; border-radius: 7px; background: #e4393f; color: #fff; line-height: 14px; text-align: center; }
.date { position: absolute; top: 6px; right: 0; left: 0; display: flex; flex-direction: column; align-items: center; color: #252525; font-size: 16px; line-height: 20px; font-weight: 300; }
.date b { color: #fff; font-size: 6px; line-height: 9px; font-weight: 700; }

.pointer { position: absolute; top: 460px; left: 1121px; width: 30px; height: 30px; border-radius: 15px; background: #fafa3c; }
.pointer svg { width: 16px; height: 26px; margin: 15px 0 0 15px; }
</style>
